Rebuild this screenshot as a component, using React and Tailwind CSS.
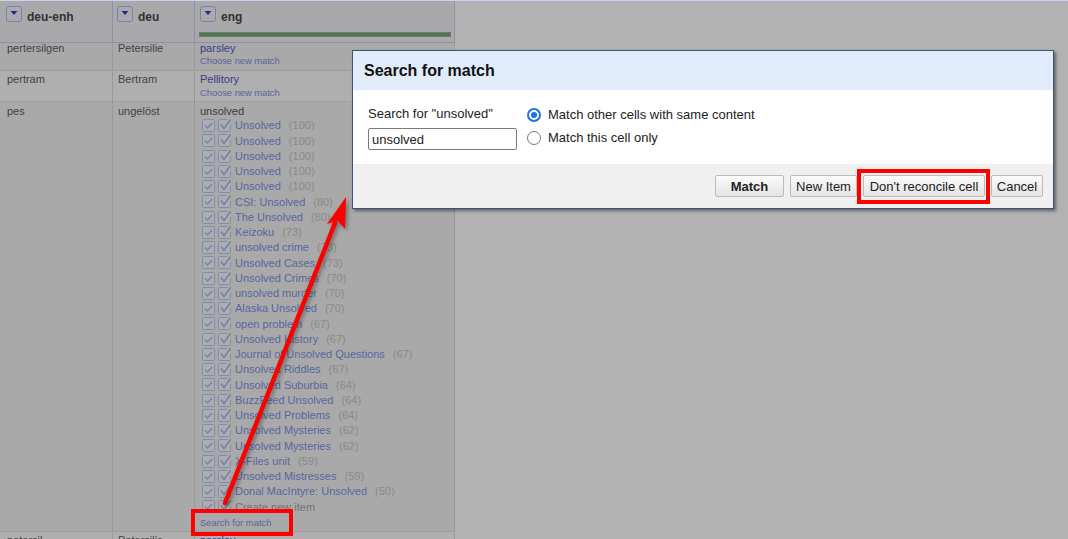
import React from "react";

const candidates = [
  ["Unsolved", 100],
  ["Unsolved", 100],
  ["Unsolved", 100],
  ["Unsolved", 100],
  ["Unsolved", 100],
  ["CSI: Unsolved", 80],
  ["The Unsolved", 80],
  ["Keizoku", 73],
  ["unsolved crime", 73],
  ["Unsolved Cases", 73],
  ["Unsolved Crimes", 70],
  ["unsolved murder", 70],
  ["Alaska Unsolved", 70],
  ["open problem", 67],
  ["Unsolved History", 67],
  ["Journal of Unsolved Questions", 67],
  ["Unsolved Riddles", 67],
  ["Unsolved Suburbia", 64],
  ["BuzzFeed Unsolved", 64],
  ["Unsolved Problems", 64],
  ["Unsolved Mysteries", 62],
  ["Unsolved Mysteries", 62],
  ["X-Files unit", 59],
  ["Unsolved Mistresses", 59],
  ["Donal MacIntyre: Unsolved", 50],
];

function DropBtn() {
  return (
    <span className="mt-[5px] flex h-[16px] w-[16px] shrink-0 items-start justify-center rounded-[3px] border border-[#b4b8e6] bg-[#f4f4fa]">
      <svg width="14" height="14" viewBox="0 0 14 14">
        <polygon points="3.5,4 10.5,4 7,8" fill="#3a3ad6" />
      </svg>
    </span>
  );
}

function CheckOne() {
  return (
    <svg width="13" height="13" viewBox="0 0 13 13" className="shrink-0">
      <rect x="0.5" y="0.5" width="12" height="12" rx="1" fill="#f6f8ff" stroke="#bccaee" />
      <polyline points="3,6.5 5.5,9 10,4" fill="none" stroke="#adc0ec" strokeWidth="1.5" />
    </svg>
  );
}

function CheckAll() {
  return (
    <svg width="13" height="13" viewBox="0 0 13 13" className="shrink-0">
      <path d="M9 0.5 H1.5 a1 1 0 0 0 -1 1 V11.5 a1 1 0 0 0 1 1 H11.5 a1 1 0 0 0 1 -1 V6" fill="#f6f8ff" stroke="#bccaee" />
      <polyline points="3,5.5 6,9.5 12.5,0.5" fill="none" stroke="#a6bbea" strokeWidth="1.6" />
    </svg>
  );
}

function Btn({ w, bold, children }) {
  return (
    <button
      className={`flex h-[22px] items-center justify-center rounded-[2px] border border-[#bcbcbc] bg-gradient-to-b from-[#fbfbfb] to-[#e4e4e4] text-[13px] leading-none text-[#222] ${w} ${bold ? "font-bold" : ""}`}
    >
      {children}
    </button>
  );
}

export default function App() {
  return (
    <div className="relative h-[539px] w-[1068px] overflow-hidden border-t border-[#c9d2f0] bg-white font-['Liberation_Sans',Arial,Helvetica,sans-serif]">
      {/* data table */}
      <div className="flex h-full w-[455px] flex-col">
        {/* header */}
        <div className="flex h-[42px] shrink-0 border-b border-[#c8d0f5] bg-[#f2f2f5]">
          <div className="flex w-[113px] gap-[5px] border-r border-[#c8d0f5] pl-[6px]">
            <DropBtn />
            <span className="mt-[9px] text-[12px] font-bold leading-[14px] text-[#4a4a4a]">deu-enh</span>
          </div>
          <div className="flex w-[82px] gap-[5px] border-r border-[#c8d0f5] pl-[4px]">
            <DropBtn />
            <span className="mt-[9px] text-[12px] font-bold leading-[14px] text-[#4a4a4a]">deu</span>
          </div>
          <div className="flex w-[260px] flex-col border-r border-[#c8d0f5]">
            <div className="flex h-[26px] gap-[5px] pl-[5px]">
              <DropBtn />
              <span className="mt-[9px] text-[12px] font-bold leading-[14px] text-[#4a4a4a]">eng</span>
            </div>
            <div className="ml-[4px] mr-[3px] mt-[5px] h-[5px] border border-[#a8a8a8] bg-[#6bb06a]" />
          </div>
        </div>

        {/* body */}
        <div className="flex min-h-0 flex-1 flex-col overflow-hidden text-[11px] text-[#5e5e5e]">
          {/* row 1 */}
          <div className="flex h-[28px] shrink-0 border-b border-dotted border-[#cfcfcf] bg-[#f3f3f3]">
            <div className="w-[113px] border-r border-[#dcdcdc] pl-[7px] leading-[11px]">pertersilgen</div>
            <div className="w-[82px] border-r border-[#dcdcdc] pl-[5px] leading-[11px]">Petersilie</div>
            <div className="w-[260px] border-r border-[#dcdcdc] pl-[5px]">
              <div className="leading-[11px] text-[#5656cc]">parsley</div>
              <div className="text-[9.3px] leading-[14px] text-[#8090e6]">Choose new match</div>
            </div>
          </div>

          {/* row 2 */}
          <div className="flex h-[31px] shrink-0 border-b border-dotted border-[#cfcfcf] bg-[#fbfbfb] pt-[1px]">
            <div className="w-[113px] border-r border-[#dcdcdc] pl-[7px] leading-[14px]">pertram</div>
            <div className="w-[82px] border-r border-[#dcdcdc] pl-[5px] leading-[14px]">Bertram</div>
            <div className="w-[260px] border-r border-[#dcdcdc] pl-[5px]">
              <div className="leading-[14px] text-[#5656cc]">Pellitory</div>
              <div className="text-[9.3px] leading-[14px] text-[#8090e6]">Choose new match</div>
            </div>
          </div>

          {/* row 3 */}
          <div className="flex shrink-0 border-b border-dotted border-[#cfcfcf] bg-[#f3f3f3]">
            <div className="w-[113px] border-r border-[#dcdcdc] pl-[7px] pt-[2px] leading-[14px]">pes</div>
            <div className="w-[82px] border-r border-[#dcdcdc] pl-[5px] pt-[2px] leading-[14px]">ungelöst</div>
            <div className="w-[260px] border-r border-[#dcdcdc] pb-[1px] pl-[5px] pt-[2px]">
              <div className="leading-[14px] text-[#555]">unsolved</div>
              <div className="ml-[2px] flex flex-col">
                {candidates.map(([name, score], i) => (
                  <div key={i} className="flex h-[15.25px] items-center">
                    <CheckOne />
                    <span className="ml-[3px]">
                      <CheckAll />
                    </span>
                    <span className="ml-[4px] whitespace-nowrap text-[#7e93e6]">{name}</span>
                    <span className="ml-[8px] whitespace-nowrap text-[#c6c6c6]">({score})</span>
                  </div>
                ))}
                <div className="flex h-[15.25px] items-center">
                  <CheckOne />
                  <span className="ml-[3px]">
                    <CheckAll />
                  </span>
                  <span className="ml-[4px] whitespace-nowrap text-[#a4a4a4]">Create new item</span>
                </div>
              </div>
              <div className="text-[9.4px] leading-[15px] text-[#8090e6]">Search for match</div>
            </div>
          </div>

          {/* row 4 */}
          <div className="flex shrink-0 bg-[#fbfbfb] pt-[1px]">
            <div className="w-[113px] border-r border-[#dcdcdc] pl-[7px] leading-[14px]">petersil</div>
            <div className="w-[82px] border-r border-[#dcdcdc] pl-[5px] leading-[14px]">Petersilie</div>
            <div className="w-[260px] border-r border-[#dcdcdc] pl-[5px] leading-[14px] text-[#5656cc]">parsley</div>
          </div>
        </div>
      </div>

      {/* modal overlay */}
      <div className="absolute inset-0 bg-black/30" />

      {/* dialog */}
      <div className="absolute left-[352px] top-[49px] flex w-[702px] flex-col border border-[#3e5572] bg-white shadow-[2px_2px_3px_rgba(0,0,0,0.45)]">
        <div className="flex h-[39px] items-center bg-[#e0ebfc] pl-[11px] text-[16px] font-bold text-[#111]">
          Search for match
        </div>
        <div className="flex h-[74px] text-[13px] text-[#222]">
          <div className="flex flex-col pl-[15px] pt-[16px]">
            <div className="leading-[16px]">Search for "unsolved"</div>
            <div className="mt-[6px] flex h-[22px] w-[149px] items-center rounded-[2px] border border-[#7a7a7a] pl-[3px] leading-none">
              unsolved
            </div>
          </div>
          <div className="ml-[10px] flex flex-col pt-[13px]">
            <div className="flex h-[23px] items-center">
              <span className="flex h-[14px] w-[14px] items-center justify-center rounded-full border-2 border-[#1a73e8]">
                <span className="h-[6px] w-[6px] rounded-full bg-[#1a73e8]" />
              </span>
              <span className="ml-[7px]">Match other cells with same content</span>
            </div>
            <div className="flex h-[23px] items-center">
              <span className="h-[14px] w-[14px] rounded-full border-[1.5px] border-[#767676] bg-white" />
              <span className="ml-[7px]">Match this cell only</span>
            </div>
          </div>
        </div>
        <div className="flex h-[44px] justify-end gap-[6px] bg-[#f0f0f0] pr-[10px] pt-[11px]">
          <Btn w="w-[69px]" bold>
            Match
          </Btn>
          <Btn w="w-[67px]">New Item</Btn>
          <Btn w="w-[122px]">Don't reconcile cell</Btn>
          <Btn w="w-[52px]">Cancel</Btn>
        </div>
      </div>

      {/* annotations */}
      <div className="absolute left-[191px] top-[508px] h-[27px] w-[102px] border-[4px] border-[#ff0000]" />
      <div className="absolute left-[857px] top-[168px] h-[35px] w-[133px] border-[4px] border-[#ff0000]" />
      <svg
        className="pointer-events-none absolute left-0 top-0 drop-shadow-[2px_2px_2px_rgba(0,0,0,0.35)]"
        width="1068"
        height="539"
        viewBox="0 0 1068 539"
      >
        <line x1="225" y1="502" x2="335" y2="222" stroke="#ff0000" strokeWidth="4.5" strokeLinecap="round" />
        <polygon points="346,196 345,228 337.5,219.5 327,223" fill="#ff0000" />
      </svg>
    </div>
  );
}
